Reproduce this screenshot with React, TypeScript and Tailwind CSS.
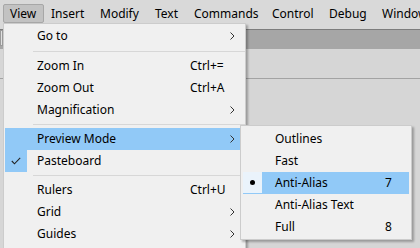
import React from "react";

const Chevron = () => (
  <svg width="5" height="8" viewBox="0 0 5 8" className="block">
    <path d="M0.5 0.5 L4 4 L0.5 7.5" fill="none" stroke="#333" strokeWidth="1" />
  </svg>
);

const Check = () => (
  <svg width="10" height="8" viewBox="0 0 10 8" className="block">
    <path d="M0.8 4 L3.5 6.8 L9.2 0.8" fill="none" stroke="#222" strokeWidth="1.1" />
  </svg>
);

type Item =
  | { sep: true; h: string }
  | { sep?: false; label: string; shortcut?: string; arrow?: boolean; active?: boolean; checked?: boolean };

const items: Item[] = [
  { label: "Go to", arrow: true },
  { sep: true, h: "h-[8px]" },
  { label: "Zoom In", shortcut: "Ctrl+=" },
  { label: "Zoom Out", shortcut: "Ctrl+A" },
  { label: "Magnification", arrow: true },
  { sep: true, h: "h-[7px]" },
  { label: "Preview Mode", arrow: true, active: true },
  { label: "Pasteboard", checked: true },
  { sep: true, h: "h-[7px]" },
  { label: "Rulers", shortcut: "Ctrl+U" },
  { label: "Grid", arrow: true },
  { label: "Guides", arrow: true },
];

const subItems = [
  { label: "Outlines" },
  { label: "Fast" },
  { label: "Anti-Alias", key: "7", active: true, bullet: true },
  { label: "Anti-Alias Text" },
  { label: "Full", key: "8" },
];

const menubar = [
  { label: "View", w: "w-[41px]", active: true },
  { label: "Insert", w: "w-[49px]" },
  { label: "Modify", w: "w-[55px]" },
  { label: "Text", w: "w-[39px]" },
  { label: "Commands", w: "w-[78px]" },
  { label: "Control", w: "w-[57px]" },
  { label: "Debug", w: "w-[53px]" },
  { label: "Window", w: "w-[60px]" },
];

export default function App() {
  return (
    <div
      className="relative w-[420px] h-[248px] overflow-hidden bg-[#d6d6d6] text-[12px] text-black"
      style={{ fontFamily: '"Noto Sans", "Liberation Sans", sans-serif' }}
    >
      {/* menu bar */}
      <div className="h-[29px] bg-[#d9d9d9] flex items-start pt-[4px] pl-[3px]">
        {menubar.map((m) => (
          <div
            key={m.label}
            className={`${m.w} h-[19px] shrink-0 flex items-center whitespace-nowrap leading-none ${
              m.active ? "pl-[6px] bg-[#c2c2c2] border border-[#a7a7a7] rounded-[2px]" : "pl-[7px]"
            }`}
          >
            {m.label}
          </div>
        ))}
      </div>
      {/* window chrome */}
      <div className="h-[20px] bg-[#a6a6a6] border-t border-[#7d7d7d]" />
      <div className="h-[30px] bg-[#d6d6d6] border-b border-[#a3a3a3]" />
      <div className="absolute left-0 top-[30px] w-[3px] h-[16px] border border-[#9a9a9a] bg-[#e0e0e0]" />

      {/* main menu */}
      <div className="absolute left-[3px] top-[23px] w-[243px] h-[240px] bg-[#f0f0f0] border border-[#cccccc] shadow-[2px_2px_2px_rgba(0,0,0,0.28)] pt-[1px]">
        {items.map((it, i) =>
          it.sep ? (
            <div key={i} className={`${it.h} flex items-center pl-[29px]`}>
              <div className="h-px w-full bg-[#d7d7d7]" />
            </div>
          ) : (
            <div
              key={i}
              className={`h-[22px] ml-[1px] mr-[2px] flex items-center relative ${
                it.active ? "bg-[#91c9f7]" : ""
              }`}
            >
              {it.checked && (
                <div className="absolute left-0 top-0 w-[22px] h-[22px] bg-[#91c9f7] flex items-center justify-center">
                  <Check />
                </div>
              )}
              <div className="pl-[32px] w-[185px] shrink-0 whitespace-nowrap">{it.label}</div>
              <div className="flex-1 whitespace-nowrap">{it.shortcut}</div>
              {it.arrow && (
                <div className="pr-[8px]">
                  <Chevron />
                </div>
              )}
            </div>
          )
        )}
      </div>

      {/* submenu */}
      <div className="absolute left-[240px] top-[125px] w-[172px] h-[115px] bg-[#f0f0f0] border border-[#cccccc] shadow-[2px_2px_2px_rgba(0,0,0,0.28)] pt-[2px]">
        {subItems.map((s) => (
          <div
            key={s.label}
            className={`h-[22px] mx-[2px] flex items-center ${s.active ? "bg-[#91c9f7]" : ""}`}
          >
            <div
              className={`w-[19px] h-[21px] shrink-0 self-start flex items-center justify-center ${
                s.bullet ? "bg-[#eaf3fb]" : ""
              }`}
            >
              {s.bullet && <div className="w-[5px] h-[5px] rounded-full bg-black" />}
            </div>
            <div className="pl-[13px] w-[123px] shrink-0 whitespace-nowrap">{s.label}</div>
            <div className="whitespace-nowrap">{s.key}</div>
          </div>
        ))}
      </div>
    </div>
  );
}
